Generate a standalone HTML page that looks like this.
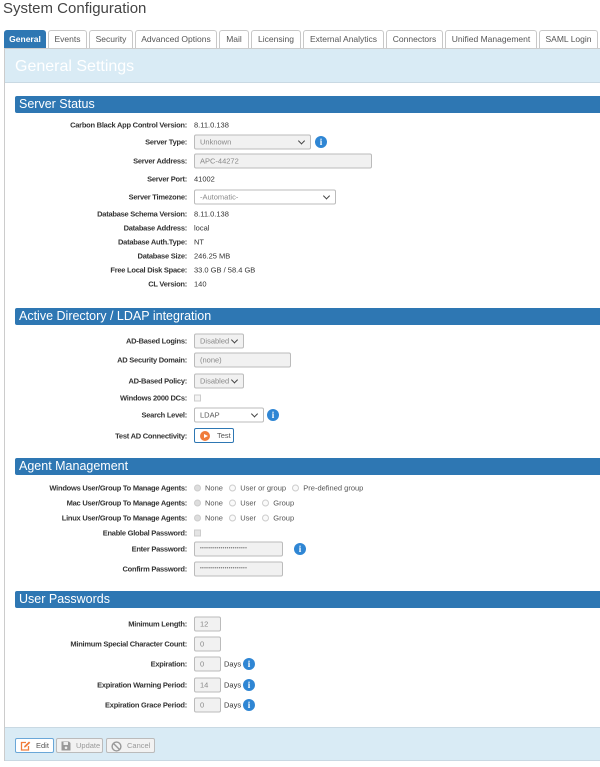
<!DOCTYPE html>
<html><head><meta charset="utf-8"><style>
*{box-sizing:border-box;margin:0;padding:0}
body{width:600px;height:767px;background:#fff;font-family:"Liberation Sans",sans-serif;position:relative;overflow:hidden;color:#333}
.a{position:absolute}
h1{position:absolute;left:3px;top:0px;font-size:15px;font-weight:normal;color:#444}
.tab{position:absolute;top:30px;height:19px;border:1px solid #c8c8c8;border-bottom:none;border-radius:3px 3px 0 0;background:#fff;font-size:8.5px;color:#555;text-align:center;line-height:17px}
.tab.on{background:#2e77b3;color:#fff;border-color:#2e77b3;font-weight:bold}
.panel{position:absolute;left:4px;top:48px;width:600px;height:713px;border-left:1px solid #ccc;border-top:1px solid #ccc}
.band{position:absolute;left:5px;width:595px;background:#d9ebf5}
.sec{position:absolute;left:15px;width:590px;height:17px;background:#2e77b3;color:#fff;font-size:12.5px;line-height:17px;padding-left:4px;border-radius:2px 0 0 2px}
.l{position:absolute;right:413px;font-size:7.5px;font-weight:bold;color:#333;white-space:nowrap;transform:translateY(-50%);letter-spacing:-0.25px}
.v{position:absolute;left:194px;font-size:7.5px;color:#333;white-space:nowrap;transform:translateY(-50%)}
.in{position:absolute;height:15px;border:1px solid #bbb;border-radius:2px;background:#f1f1f1;font-size:7.5px;color:#888;line-height:13px;padding-left:5px;transform:translateY(-50%)}
.sel::after{content:"";position:absolute;right:6px;top:3px;width:4px;height:4px;border-right:1.5px solid #444;border-bottom:1.5px solid #444;transform:rotate(45deg)}
.i{position:absolute;width:12px;height:12px;border-radius:50%;background:#2f86d4;color:#fff;font-size:9px;font-weight:bold;text-align:center;line-height:12px;font-family:"Liberation Serif",serif;transform:translateY(-50%)}
.r{display:inline-block;width:7px;height:7px;border:1px solid #ccc;border-radius:50%;vertical-align:-1px;margin-right:4px;background:#fafafa}
.r.c{background:#ddd}
.cb{position:absolute;left:194px;width:7px;height:7px;border:1px solid #ccc;background:#f4f4f4;transform:translateY(-50%)}
.btn{position:absolute;top:738px;height:15px;border:1px solid #bbb;border-radius:2px;background:#f2f2f2;font-size:7.5px;color:#999;line-height:13px}
.pw{font-size:5px;letter-spacing:0.3px;color:#777}
</style></head><body>
<h1>System Configuration</h1>
<div class="tab on" style="left:4px;width:42px">General</div>
<div class="tab" style="left:48px;width:39px">Events</div>
<div class="tab" style="left:89px;width:44px">Security</div>
<div class="tab" style="left:135px;width:82px">Advanced Options</div>
<div class="tab" style="left:219px;width:30px">Mail</div>
<div class="tab" style="left:251px;width:50px">Licensing</div>
<div class="tab" style="left:303px;width:81px">External Analytics</div>
<div class="tab" style="left:386px;width:57px">Connectors</div>
<div class="tab" style="left:445px;width:92px">Unified Management</div>
<div class="tab" style="left:539px;width:59px">SAML Login</div>
<div class="panel"></div>
<div class="band" style="top:49px;height:34px;border-bottom:1px solid #c9d9e3"><div class="a" style="left:10px;top:9px;font-size:16px;color:#fff">General Settings</div></div>

<div class="sec" style="top:96px">Server Status</div>
<div class="l" style="top:125px">Carbon Black App Control Version:</div><div class="v" style="top:125px">8.11.0.138</div>
<div class="l" style="top:142px">Server Type:</div><div class="in sel" style="left:194px;top:142px;width:117px">Unknown</div><div class="i" style="left:315px;top:142px">i</div>
<div class="l" style="top:161px">Server Address:</div><div class="in" style="left:194px;top:161px;width:178px">APC-44272</div>
<div class="l" style="top:179px">Server Port:</div><div class="v" style="top:179px">41002</div>
<div class="l" style="top:197px">Server Timezone:</div><div class="in sel" style="left:194px;top:197px;width:142px;background:#fff">-Automatic-</div>
<div class="l" style="top:214px">Database Schema Version:</div><div class="v" style="top:214px">8.11.0.138</div>
<div class="l" style="top:228px">Database Address:</div><div class="v" style="top:228px">local</div>
<div class="l" style="top:242px">Database Auth.Type:</div><div class="v" style="top:242px">NT</div>
<div class="l" style="top:256px">Database Size:</div><div class="v" style="top:256px">246.25 MB</div>
<div class="l" style="top:270px">Free Local Disk Space:</div><div class="v" style="top:270px">33.0 GB / 58.4 GB</div>
<div class="l" style="top:284px">CL Version:</div><div class="v" style="top:284px">140</div>

<div class="sec" style="top:308px">Active Directory / LDAP integration</div>
<div class="l" style="top:341px">AD-Based Logins:</div><div class="in sel" style="left:194px;top:341px;width:50px">Disabled</div>
<div class="l" style="top:360px">AD Security Domain:</div><div class="in" style="left:194px;top:360px;width:97px">(none)</div>
<div class="l" style="top:381px">AD-Based Policy:</div><div class="in sel" style="left:194px;top:381px;width:50px">Disabled</div>
<div class="l" style="top:398px">Windows 2000 DCs:</div><div class="cb" style="top:398px"></div>
<div class="l" style="top:415px">Search Level:</div><div class="in sel" style="left:194px;top:415px;width:70px;background:#fff;color:#555">LDAP</div><div class="i" style="left:267px;top:415px">i</div>
<div class="l" style="top:436px">Test AD Connectivity:</div>
<div class="a" style="left:194px;top:428px;width:40px;height:15px;border:1px solid #2e77b3;border-radius:2px;background:#fff;font-size:7.5px;color:#555;line-height:13px;padding-left:22px">Test<div class="a" style="left:5px;top:2px;width:10px;height:10px;border-radius:50%;background:#f07c3a"><div class="a" style="left:4px;top:2.5px;border-left:4px solid #fff;border-top:2.5px solid transparent;border-bottom:2.5px solid transparent"></div></div></div>

<div class="sec" style="top:458px">Agent Management</div>
<div class="l" style="top:488px">Windows User/Group To Manage Agents:</div><div class="v" style="top:488px;color:#555"><span class="r c"></span>None &nbsp; <span class="r"></span>User or group &nbsp; <span class="r"></span>Pre-defined group</div>
<div class="l" style="top:503px">Mac User/Group To Manage Agents:</div><div class="v" style="top:503px;color:#555"><span class="r c"></span>None &nbsp; <span class="r"></span>User &nbsp; <span class="r"></span>Group</div>
<div class="l" style="top:518px">Linux User/Group To Manage Agents:</div><div class="v" style="top:518px;color:#555"><span class="r c"></span>None &nbsp; <span class="r"></span>User &nbsp; <span class="r"></span>Group</div>
<div class="l" style="top:533px">Enable Global Password:</div><div class="cb" style="top:533px;background:#e4e4e4"></div>
<div class="l" style="top:549px">Enter Password:</div><div class="in pw" style="left:194px;top:549px;width:89px">•••••••••••••••••••••••</div><div class="i" style="left:294px;top:549px">i</div>
<div class="l" style="top:569px">Confirm Password:</div><div class="in pw" style="left:194px;top:569px;width:89px">•••••••••••••••••••••••</div>

<div class="sec" style="top:591px">User Passwords</div>
<div class="l" style="top:624px">Minimum Length:</div><div class="in" style="left:194px;top:624px;width:27px">12</div>
<div class="l" style="top:644px">Minimum Special Character Count:</div><div class="in" style="left:194px;top:644px;width:27px">0</div>
<div class="l" style="top:664px">Expiration:</div><div class="in" style="left:194px;top:664px;width:27px">0</div><div class="v" style="left:224px;top:664px">Days</div><div class="i" style="left:243px;top:664px">i</div>
<div class="l" style="top:685px">Expiration Warning Period:</div><div class="in" style="left:194px;top:685px;width:27px">14</div><div class="v" style="left:224px;top:685px">Days</div><div class="i" style="left:243px;top:685px">i</div>
<div class="l" style="top:705px">Expiration Grace Period:</div><div class="in" style="left:194px;top:705px;width:27px">0</div><div class="v" style="left:224px;top:705px">Days</div><div class="i" style="left:243px;top:705px">i</div>

<div class="band" style="top:727px;height:34px;border-top:1px solid #c9d9e3;border-bottom:1px solid #c9d9e3"></div>
<div class="btn" style="left:15px;width:39px;background:#fff;border-color:#6aa7d8;color:#555;padding-left:20px">Edit
<svg class="a" style="left:4px;top:2px" width="11" height="10" viewBox="0 0 11 10"><path d="M6 1.5H1.5V9H8.5V5" fill="none" stroke="#f07c3a" stroke-width="1.3"/><path d="M4 6.5L4.3 5 9 0.5 10.3 1.8 5.6 6.3Z" fill="#f07c3a"/></svg></div>
<div class="btn" style="left:56px;width:47px;padding-left:19px">Update
<svg class="a" style="left:4px;top:2px" width="10" height="10" viewBox="0 0 10 10"><path d="M0.5 0.5H8L9.5 2V9.5H0.5Z" fill="#999"/><rect x="2.5" y="1" width="4.5" height="3" fill="#eee"/><circle cx="5" cy="6.8" r="1.3" fill="#eee"/></svg></div>
<div class="btn" style="left:106px;width:49px;padding-left:20px">Cancel
<svg class="a" style="left:4px;top:1.5px" width="11" height="11" viewBox="0 0 11 11"><circle cx="5.5" cy="5.5" r="4.4" fill="none" stroke="#999" stroke-width="1.4"/><path d="M2.4 2.4L8.6 8.6" stroke="#999" stroke-width="1.4"/></svg></div>
</body></html>
